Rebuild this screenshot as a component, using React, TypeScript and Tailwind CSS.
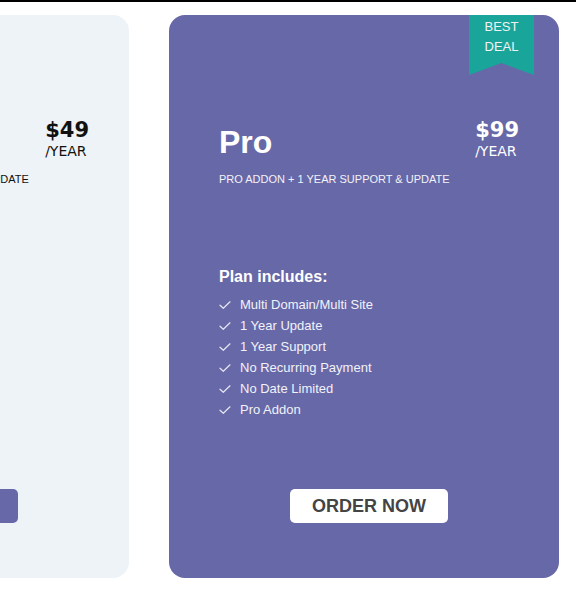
import React from "react";

const Check = () => (
  <svg width="12" height="10" viewBox="0 0 12 10" className="mr-[9px] shrink-0" fill="none">
    <path d="M1 5.2 L4.3 8.3 L11 1.8" stroke="#e6e6f2" strokeWidth="1.2" strokeLinecap="round" strokeLinejoin="round" />
  </svg>
);

const items = [
  "Multi Domain/Multi Site",
  "1 Year Update",
  "1 Year Support",
  "No Recurring Payment",
  "No Date Limited",
  "Pro Addon",
];

function Card({
  dark,
  title,
  price,
  subtitle,
  badge,
}: {
  dark: boolean;
  title: string;
  price: string;
  subtitle: string;
  badge?: boolean;
}) {
  const text = dark ? "text-white" : "text-[#111]";
  return (
    <div
      className={`relative flex h-[563px] w-[390px] shrink-0 flex-col rounded-[16px] pl-[50px] pr-[40px] pt-[103px] pb-[55px] ${
        dark ? "bg-[#6768a8]" : "bg-[#eef3f7]"
      }`}
    >
      {badge && (
        <div
          className="absolute right-[25px] top-0 flex h-[60px] w-[65px] flex-col items-center bg-[#1aa59b] pt-[2px] text-[13px] leading-[20px] text-[#f2f2f2] [clip-path:polygon(0_0,100%_0,100%_100%,50%_80%,0_100%)]"
          style={{ fontFamily: '"Liberation Sans", Arial, sans-serif' }}
        >
          <span>BEST</span>
          <span>DEAL</span>
        </div>
      )}
      <div className="flex items-start justify-between">
        <div
          className={`mt-[4px] text-[32px] font-bold leading-[40px] ${text}`}
          style={{ fontFamily: '"Liberation Sans", Arial, sans-serif' }}
        >
          {title}
        </div>
        <div
          className={`flex flex-col items-start ${text}`}
          style={{ fontFamily: '"DejaVu Sans", Verdana, sans-serif' }}
        >
          <span className="text-[21px] font-bold leading-[24px]">{price}</span>
          <span className="mt-px text-[14px] leading-[16px]">/YEAR</span>
        </div>
      </div>
      <div
        className={`mt-[9px] whitespace-nowrap text-[11px] leading-[16px] ${dark ? "text-[#f2f2f8]" : "text-[#111]"}`}
        style={{ fontFamily: '"Liberation Sans", Arial, sans-serif' }}
      >
        {subtitle}
      </div>
      <div style={{ fontFamily: '"Liberation Sans", Arial, sans-serif' }}>
        <div className={`mt-[80px] text-[16px] font-bold leading-[20px] ${text}`}>Plan includes:</div>
        <ul className="mt-[7px]">
          {items.map((it) => (
            <li
              key={it}
              className={`flex items-center text-[13px] leading-[21px] ${dark ? "text-[#f2f2f8]" : "text-[#333]"}`}
            >
              <Check />
              {it}
            </li>
          ))}
        </ul>
      </div>
      <button
        className={`mt-auto flex h-[34px] w-[158px] items-center justify-center self-center rounded-[5px] text-[18px] font-bold ${
          dark ? "bg-white text-[#444]" : "bg-[#6768a8] text-white"
        }`}
        style={{ fontFamily: '"Liberation Sans", Arial, sans-serif' }}
      >
        ORDER NOW
      </button>
    </div>
  );
}

export default function App() {
  return (
    <div className="h-[598px] w-[576px] overflow-hidden bg-white">
      <div className="h-[2px] w-full bg-black" />
      <div className="ml-[-261px] mt-[13px] flex gap-[40px]">
        <Card dark={false} title="Basic" price="$49" subtitle="BASIC ADDON + 1 YEAR SUPPORT & UPDATE" />
        <Card dark title="Pro" price="$99" subtitle="PRO ADDON + 1 YEAR SUPPORT & UPDATE" badge />
      </div>
    </div>
  );
}
